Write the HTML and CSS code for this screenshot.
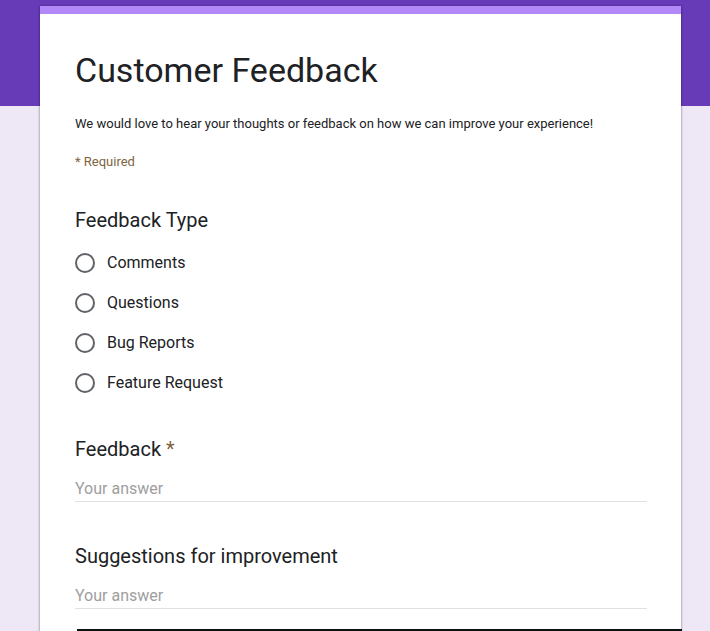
FILE: index.html
```html
<!DOCTYPE html>
<html>
<head>
<meta charset="utf-8">
<link rel="stylesheet" href="styles.css">
</head>
<body>
<div class="page">
  <div class="card">
    <div class="stripe"></div>
    <div class="content">
      <h1 class="title">Customer Feedback</h1>
      <p class="desc">We would love to hear your thoughts or feedback on how we can improve your experience!</p>
      <p class="required">* Required</p>

      <div class="question">
        <div class="q-title">Feedback Type</div>
        <div class="options">
          <label class="option"><span class="radio"></span><span class="opt-label">Comments</span></label>
          <label class="option"><span class="radio"></span><span class="opt-label">Questions</span></label>
          <label class="option"><span class="radio"></span><span class="opt-label">Bug Reports</span></label>
          <label class="option"><span class="radio"></span><span class="opt-label">Feature Request</span></label>
        </div>
      </div>

      <div class="question">
        <div class="q-title">Feedback <span class="star">*</span></div>
        <div class="answer">Your answer</div>
      </div>

      <div class="question">
        <div class="q-title">Suggestions for improvement</div>
        <div class="answer">Your answer</div>
      </div>
      <div class="bottom-bar"></div>
    </div>
  </div>
</div>
</body>
</html>
```

FILE: styles.css
```css
* { box-sizing: border-box; }
html, body { margin: 0; padding: 0; }
body {
  font-family: Roboto, "Liberation Sans", Arial, sans-serif;
  color: #202124;
  background: linear-gradient(to bottom, #673ab7 0, #673ab7 106px, #ede7f6 106px, #ede7f6 100%);
  min-height: 631px;
  overflow: hidden;
}
.page {
  padding: 6px 0 0 40px;
}
.card {
  width: 641px;
  background: #fff;
  box-shadow: 0 1px 2px rgba(0,0,0,0.25), 1px 0 2px rgba(0,0,0,0.15), -1px 0 2px rgba(0,0,0,0.15);
  height: 640px;
}
.stripe {
  height: 8px;
  background: #b388f9;
}
.content {
  padding: 0 34px 0 35px;
  display: flex;
  flex-direction: column;
}
.title {
  margin: 36px 0 0 0;
  font-size: 34px;
  font-weight: 400;
  line-height: 40px;
  color: #202124;
}
.desc {
  margin: 24px 0 0 0;
  font-size: 13px;
  line-height: 20px;
}
.required {
  margin: 19px 0 0 0;
  font-size: 13px;
  line-height: 18px;
  color: #80643f;
}
.question {
  display: flex;
  flex-direction: column;
}
.q-title {
  font-size: 20px;
  line-height: 24px;
  color: #202124;
}
.question:nth-of-type(1) { margin-top: 37px; }
.question:nth-of-type(2) { margin-top: 44px; }
.question:nth-of-type(3) { margin-top: 42px; }
.star { color: #80643f; }
.options {
  display: flex;
  flex-direction: column;
  gap: 20px;
  margin-top: 21px;
}
.option {
  display: flex;
  align-items: center;
  height: 20px;
  gap: 12px;
}
.radio {
  width: 20px;
  height: 20px;
  border: 2px solid #5f6368;
  border-radius: 50%;
  flex: none;
}
.opt-label {
  font-size: 16px;
  line-height: 20px;
}
.answer {
  margin-top: 16px;
  font-size: 16px;
  line-height: 24px;
  color: #9e9e9e;
  border-bottom: 1px solid #e0e0e0;
}
.bottom-bar {
  margin-top: 20px;
  margin-left: 2px;
  margin-right: -35px;
  height: 3px;
  background: #111;
}
```
